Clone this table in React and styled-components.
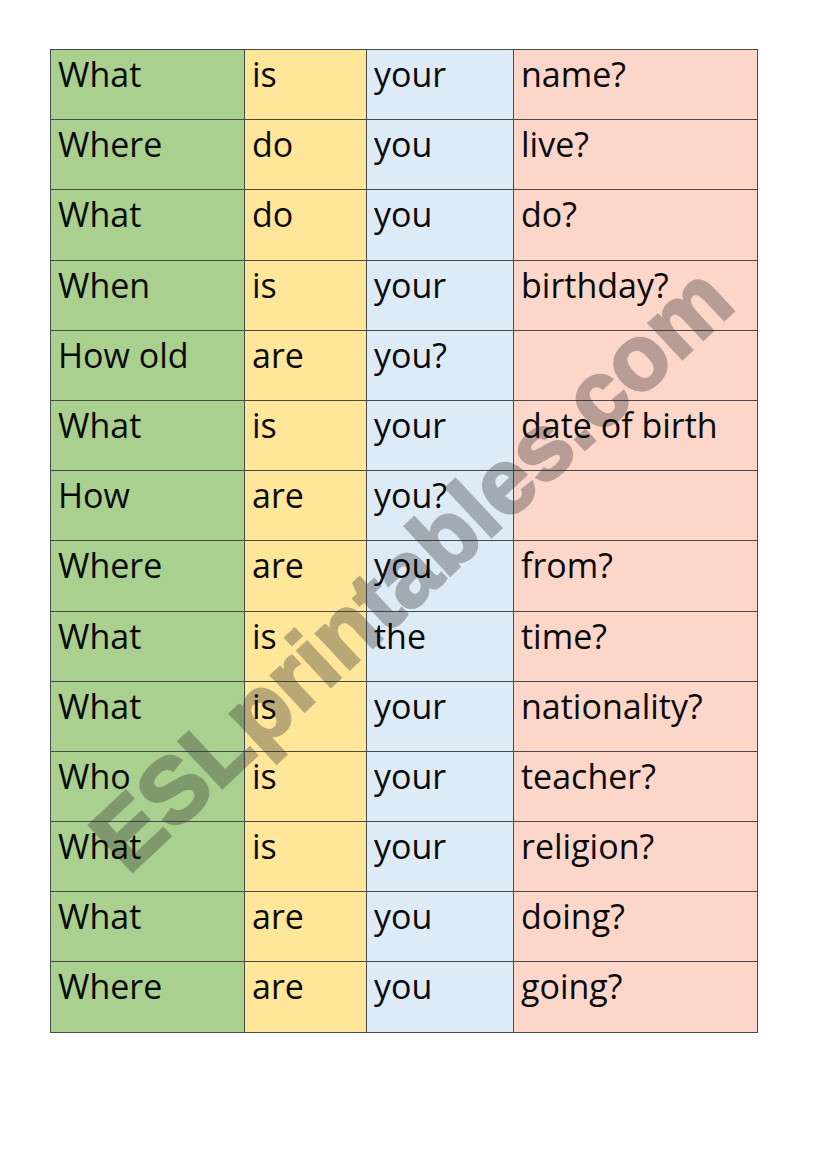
import React from "react";
import styled, { createGlobalStyle } from "styled-components";

const Global = createGlobalStyle`
  html, body { margin: 0; padding: 0; background: #ffffff; }
  body { width: 821px; height: 1161px; overflow: hidden; }
`;

const Page = styled.div`
  width: 821px;
  height: 1161px;
  padding: 49px 0 0 50px;
  box-sizing: border-box;
  background: #ffffff;
`;

const Sheet = styled.div`
  position: relative;
  display: grid;
  grid-template-columns: 194px 122px 147px 244px;
  grid-auto-rows: 70.2px;
  width: max-content;
  border-top: 1px solid #4a4a4a;
  border-left: 1px solid #4a4a4a;
`;

const palette = ["#a9d08e", "#ffe699", "#ddebf7", "#fcd6c9"];

const Cell = styled.div`
  background: ${(p) => palette[p.$col]};
  border-right: 1px solid #4a4a4a;
  border-bottom: 1px solid #4a4a4a;
  padding: 4px 0 0 7px;
  box-sizing: border-box;
  overflow: hidden;
`;

const Word = styled.span`
  position: relative;
  z-index: 2;
  font-family: "Open Sans", "Noto Sans", sans-serif;
  font-size: 34px;
  line-height: 41px;
  color: #0a0a0a;
  white-space: nowrap;
`;

const Watermark = styled.div`
  position: absolute;
  z-index: 1;
  left: 360px;
  top: 518px;
  width: 0;
  height: 0;
  pointer-events: none;
`;

const WatermarkText = styled.span`
  position: absolute;
  left: 0;
  top: 0;
  transform: translate(-50%, -50%) rotate(-43deg);
  font-family: "Liberation Sans", Arial, sans-serif;
  font-weight: 700;
  font-size: 92px;
  line-height: 1;
  color: #2d2d2d;
  -webkit-text-stroke: 3px #2d2d2d;
  opacity: 0.33;
  white-space: nowrap;
`;

const rows = [
  ["What", "is", "your", "name?"],
  ["Where", "do", "you", "live?"],
  ["What", "do", "you", "do?"],
  ["When", "is", "your", "birthday?"],
  ["How old", "are", "you?", ""],
  ["What", "is", "your", "date of birth"],
  ["How", "are", "you?", ""],
  ["Where", "are", "you", "from?"],
  ["What", "is", "the", "time?"],
  ["What", "is", "your", "nationality?"],
  ["Who", "is", "your", "teacher?"],
  ["What", "is", "your", "religion?"],
  ["What", "are", "you", "doing?"],
  ["Where", "are", "you", "going?"],
];

export default function App() {
  return (
    <Page>
      <Global />
      <Sheet>
        {rows.map((r, i) =>
          r.map((w, j) => (
            <Cell key={`${i}-${j}`} $col={j}>
              {w && <Word>{w}</Word>}
            </Cell>
          ))
        )}
        <Watermark>
          <WatermarkText>ESLprintables.com</WatermarkText>
        </Watermark>
      </Sheet>
    </Page>
  );
}
